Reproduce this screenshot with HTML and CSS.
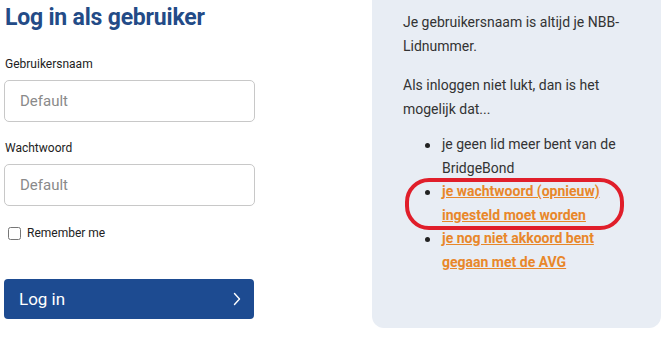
FILE: index.html
```html
<!DOCTYPE html>
<html lang="nl">
<head>
<meta charset="utf-8">
<title>Log in als gebruiker</title>
<link rel="stylesheet" href="styles.css">
</head>
<body>
<div class="page">
  <form class="login">
    <h1 class="title">Log in als gebruiker</h1>
    <label class="label" for="user">Gebruikersnaam</label>
    <input class="field" id="user" type="text" placeholder="Default">
    <label class="label" for="pass">Wachtwoord</label>
    <input class="field" id="pass" type="password" placeholder="Default">
    <label class="remember"><input class="check" type="checkbox"> Remember me</label>
    <button class="submit" type="button">
      <span>Log in</span>
      <svg class="chev" width="8" height="14" viewBox="0 0 8 14" aria-hidden="true"><path d="M1.5 1.5 L6.5 7 L1.5 12.5" fill="none" stroke="#ffffff" stroke-width="1.4" stroke-linecap="round" stroke-linejoin="round"/></svg>
    </button>
  </form>
  <aside class="help">
    <p class="help-p">Je gebruikersnaam is altijd je NBB-Lidnummer.</p>
    <p class="help-p">Als inloggen niet lukt, dan is het mogelijk dat...</p>
    <ul class="help-list">
      <li class="help-item">je geen lid meer bent van de BridgeBond</li>
      <li class="help-item"><a class="help-link" href="#">je wachtwoord (opnieuw) ingesteld moet worden</a></li>
      <li class="help-item"><a class="help-link" href="#">je nog niet akkoord bent gegaan met de AVG</a></li>
    </ul>
    <div class="annot"></div>
  </aside>
</div>
</body>
</html>
```
FILE: styles.css
```css
html, body {
  margin: 0;
  padding: 0;
  background: #ffffff;
}
body {
  font-family: Roboto, "Noto Sans", sans-serif;
  color: #222222;
}
.page {
  display: flex;
  align-items: flex-start;
  width: 664px;
  height: 339px;
  overflow: hidden;
}
.login {
  width: 251px;
  margin-left: 4px;
  display: flex;
  flex-direction: column;
  align-items: flex-start;
}
.title {
  margin: 4px 0 0 1px;
  font-size: 23px;
  line-height: 28px;
  font-weight: 700;
  color: #234b87;
  letter-spacing: -0.2px;
}
.label {
  margin: 24px 0 0 1px;
  font-size: 12px;
  line-height: 16px;
  color: #222222;
}
.field {
  box-sizing: border-box;
  width: 251px;
  height: 42px;
  margin-top: 8px;
  padding: 0 15px;
  border: 1px solid #c8c8c8;
  border-radius: 5px;
  font-family: Roboto, sans-serif;
  font-size: 15px;
  color: #333333;
  background: #ffffff;
}
.field::placeholder {
  color: #8a8a8a;
}
.field + .label {
  margin-top: 18px;
}
.remember {
  display: flex;
  align-items: center;
  gap: 6px;
  margin: 19px 0 0 4px;
  font-size: 12px;
  line-height: 16px;
  color: #222222;
}
.check {
  width: 13px;
  height: 13px;
  margin: 0;
}
.submit {
  box-sizing: border-box;
  display: flex;
  align-items: center;
  justify-content: space-between;
  width: 250px;
  height: 40px;
  margin-top: 38px;
  padding: 0 13px 0 15px;
  border: none;
  border-radius: 4px;
  background: #1d4b91;
  color: #ffffff;
  font-family: Roboto, sans-serif;
  font-size: 17px;
  cursor: pointer;
}
.chev {
  display: block;
}
.help {
  position: relative;
  box-sizing: border-box;
  width: 289px;
  height: 328px;
  margin-left: 117px;
  padding: 11px 26px 0 31px;
  background: #e8edf4;
  border-radius: 0 0 12px 12px;
  font-size: 14px;
  line-height: 23.5px;
  color: #333333;
}
.help-p {
  margin: 0 0 16px;
}
.help-p + .help-p {
  margin-bottom: 12px;
}
.help-list {
  margin: 0;
  padding-left: 39px;
  list-style: none;
}
.help-item {
  position: relative;
}
.help-item::before {
  content: "";
  position: absolute;
  left: -17px;
  top: 10px;
  width: 5px;
  height: 5px;
  border-radius: 50%;
  background: #222222;
}
.help-link {
  color: #e8872a;
  font-weight: 700;
  text-decoration: underline;
}
.annot {
  position: absolute;
  left: 33px;
  top: 178px;
  width: 219px;
  height: 52px;
  box-sizing: border-box;
  border: 4px solid #e01e2a;
  border-radius: 24px;
  pointer-events: none;
}
```
